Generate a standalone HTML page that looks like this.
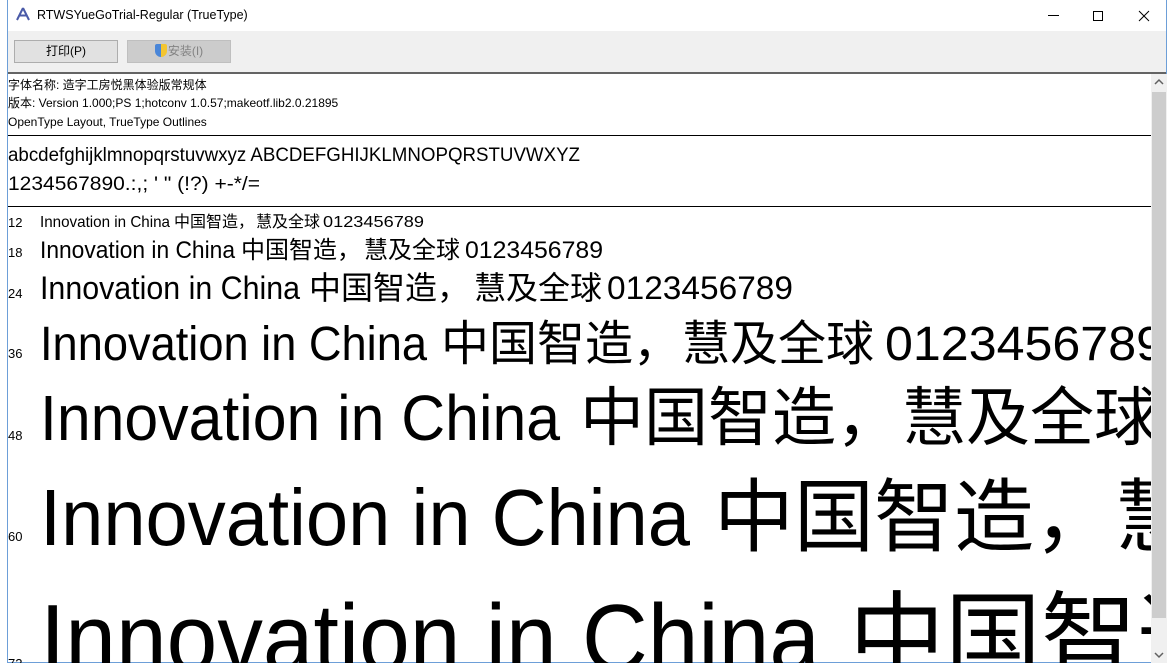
<!DOCTYPE html>
<html><head><meta charset="utf-8"><style>
html,body{margin:0;padding:0;width:1175px;height:671px;overflow:hidden;background:#fff;font-family:"Liberation Sans","Noto Sans CJK SC",sans-serif}
.win{position:absolute;left:7px;top:0;width:1160px;height:663px;border:1px solid #6d9fd8;border-top:none;background:#fff;box-sizing:border-box}
.title{position:absolute;left:37px;top:8px;font-size:12.5px;color:#000}
.tb{position:absolute;left:8px;top:31px;width:1158px;height:41px;background:#f0f0f0;border-bottom:2px solid #646464}
.btn{position:absolute;top:9px;width:104px;height:23px;box-sizing:border-box;font-size:12px;text-align:center;line-height:21px}
.sb{position:absolute;left:1151px;top:74px;width:16px;height:589px;background:#f0f0f0}
.thumb{position:absolute;left:1152px;top:92px;width:14px;height:526px;background:#cdcdcd}
</style></head><body>
<div class="win"></div>
<svg style="position:absolute;left:16px;top:7px" width="14" height="14" viewBox="0 0 14 14"><path d="M7 1 L1 13 M7 1 L13 13 M3.5 8.5 H10.5" stroke="#4a5aa8" stroke-width="2" fill="none"/></svg>
<div class="title">RTWSYueGoTrial-Regular (TrueType)</div>
<svg style="position:absolute;left:1045px;top:8px" width="110" height="16"><path d="M3 7.5H14" stroke="#000"/><path d="M48.5 3.5h9v9h-9z" stroke="#000" fill="none"/><path d="M94 3L104 13M104 3L94 13" stroke="#000"/></svg>
<div class="tb">
<div class="btn" style="left:6px;background:#e1e1e1;border:1px solid #adadad">打印(P)</div>
<div class="btn" style="left:119px;background:#cccccc;border:1px solid #bfbfbf;color:#838383"><span style="display:inline-block;width:12px;height:13px;background:linear-gradient(90deg,#4a86d8 50%,#f4c530 50%);border-radius:2px 2px 6px 6px;vertical-align:-2px;margin-right:1px"></span>安装(I)</div>
</div>
<div class="sb"></div><div class="thumb"></div>
<svg style="position:absolute;left:1151px;top:74px" width="16" height="589"><path d="M4 10L8 6L12 10" stroke="#606060" stroke-width="1.5" fill="none"/><path d="M4 579L8 583L12 579" stroke="#606060" stroke-width="1.5" fill="none"/></svg>
<svg style="position:absolute;left:0;top:0" width="1175" height="671" font-family="Liberation Sans, Noto Sans CJK SC, sans-serif">
<defs><clipPath id="c"><rect x="8" y="74" width="1143" height="589"/></clipPath></defs>
<g clip-path="url(#c)" fill="#000">
<text x="8" y="89" font-size="12">字体名称: 造字工房悦黑体验版常规体</text>
<text x="8" y="107" font-size="12">版本: Version 1.000;PS 1;hotconv 1.0.57;makeotf.lib2.0.21895</text>
<text x="8" y="126" font-size="12">OpenType Layout, TrueType Outlines</text>
<rect x="8" y="135" width="1143" height="1"/>
<text x="8" y="161" font-size="19" textLength="572" lengthAdjust="spacingAndGlyphs">abcdefghijklmnopqrstuvwxyz ABCDEFGHIJKLMNOPQRSTUVWXYZ</text>
<text x="8" y="190" font-size="19" textLength="252" lengthAdjust="spacingAndGlyphs">1234567890.:,; ' " (!?) +-*/=</text>
<rect x="8" y="206" width="1143" height="1"/>
<g font-size="13"><text x="8" y="227">12</text><text x="8" y="257">18</text><text x="8" y="298">24</text><text x="8" y="358">36</text><text x="8" y="440">48</text><text x="8" y="541">60</text><text x="8" y="668">72</text></g>
<g font-size="16"><text x="40" y="227" textLength="130" lengthAdjust="spacingAndGlyphs">Innovation in China</text><text x="174" y="227">中国智造，</text><text x="256" y="227">慧及全球</text><text x="323" y="227" textLength="101" lengthAdjust="spacingAndGlyphs">0123456789</text></g>
<g font-size="24"><text x="40" y="258" textLength="195" lengthAdjust="spacingAndGlyphs">Innovation in China</text><text x="241" y="258">中国智造，</text><text x="364" y="258">慧及全球</text><text x="465" y="258" textLength="138" lengthAdjust="spacingAndGlyphs">0123456789</text></g>
<g font-size="32"><text x="40" y="299" textLength="260" lengthAdjust="spacingAndGlyphs">Innovation in China</text><text x="309" y="299">中国智造，</text><text x="474" y="299">慧及全球</text><text x="607" y="299" textLength="186" lengthAdjust="spacingAndGlyphs">0123456789</text></g>
<g font-size="48"><text x="40" y="360" textLength="387" lengthAdjust="spacingAndGlyphs">Innovation in China</text><text x="441" y="360">中国智造，</text><text x="682" y="360">慧及全球</text><text x="885" y="360" textLength="279" lengthAdjust="spacingAndGlyphs">0123456789</text></g>
<g font-size="64"><text x="40" y="440" textLength="520" lengthAdjust="spacingAndGlyphs">Innovation in China</text><text x="580" y="440">中国智造，</text><text x="902" y="440">慧及全球</text></g>
<g font-size="80"><text x="40" y="545" textLength="650" lengthAdjust="spacingAndGlyphs">Innovation in China</text><text x="714" y="545">中国智造，</text><text x="1115" y="545">慧及全球</text></g>
<g font-size="96"><text x="40" y="671" textLength="780" lengthAdjust="spacingAndGlyphs">Innovation in China</text><text x="849" y="671">中国智造，</text></g>
</g></svg>
</body></html>
